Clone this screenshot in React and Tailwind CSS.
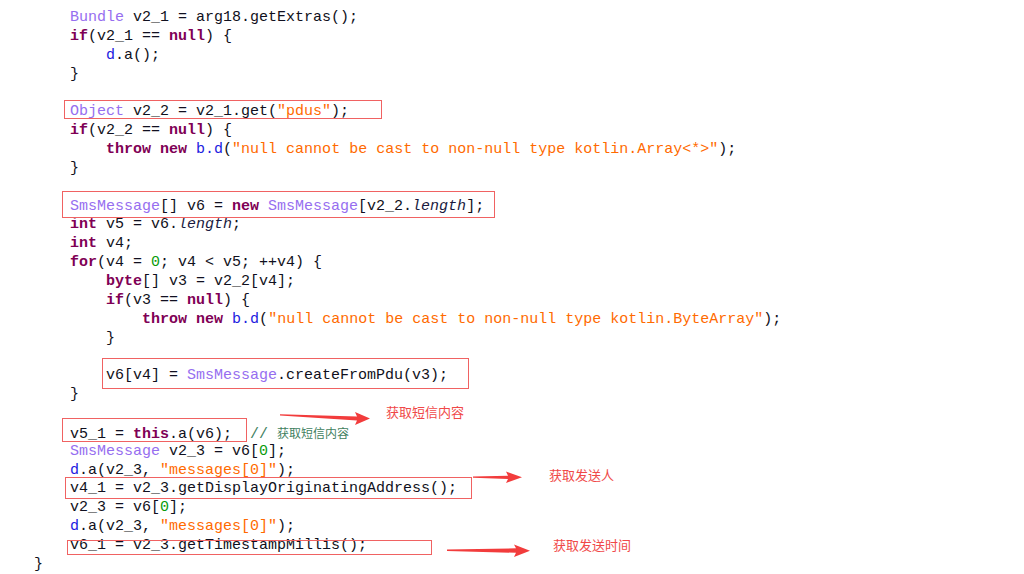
import React from 'react';

const tone = {
  k: 'text-[#7f0055] font-bold',
  t: 'text-[#966ef0]',
  f: 'text-[#2020e0]',
  s: 'text-[#ff6a00]',
  n: 'text-[#0a9a0a]',
  i: 'italic text-[#1a1a40]',
  c: 'text-[#3f7f5f]',
  cj: 'text-[#3f7f5f] text-[12px] font-["Noto_Sans_CJK_SC",sans-serif]',
};

const msg = [['    '], ['d', 'f'], ['.a(v2_3, '], ['"messages[0]"', 's'], [');']];

const lines = [
  [['    '], ['Bundle', 't'], [' v2_1 = arg18.getExtras();']],
  [['    '], ['if', 'k'], ['(v2_1 == '], ['null', 'k'], [') {']],
  [['        '], ['d', 'f'], ['.a();']],
  [['    }']],
  [],
  [['    '], ['Object', 't'], [' v2_2 = v2_1.get('], ['"pdus"', 's'], [');']],
  [['    '], ['if', 'k'], ['(v2_2 == '], ['null', 'k'], [') {']],
  [['        '], ['throw', 'k'], [' '], ['new', 'k'], [' '], ['b.d', 'f'], ['('], ['"null cannot be cast to non-null type kotlin.Array<*>"', 's'], [');']],
  [['    }']],
  [],
  [['    '], ['SmsMessage', 't'], ['[] v6 = '], ['new', 'k'], [' '], ['SmsMessage', 't'], ['[v2_2.'], ['length', 'i'], ['];']],
  [['    '], ['int', 'k'], [' v5 = v6.'], ['length', 'i'], [';']],
  [['    '], ['int', 'k'], [' v4;']],
  [['    '], ['for', 'k'], ['(v4 = '], ['0', 'n'], ['; v4 < v5; ++v4) {']],
  [['        '], ['byte', 'k'], ['[] v3 = v2_2[v4];']],
  [['        '], ['if', 'k'], ['(v3 == '], ['null', 'k'], [') {']],
  [['            '], ['throw', 'k'], [' '], ['new', 'k'], [' '], ['b.d', 'f'], ['('], ['"null cannot be cast to non-null type kotlin.ByteArray"', 's'], [');']],
  [['        }']],
  [],
  [['        v6[v4] = '], ['SmsMessage', 't'], ['.createFromPdu(v3);']],
  [['    }']],
  [],
  [['    v5_1 = '], ['this', 'k'], ['.a(v6);  '], ['// ', 'c'], ['获取短信内容', 'cj']],
  [['    '], ['SmsMessage', 't'], [' v2_3 = v6['], ['0', 'n'], ['];']],
  msg,
  [['    v4_1 = v2_3.getDisplayOriginatingAddress();']],
  [['    v2_3 = v6['], ['0', 'n'], ['];']],
  msg,
  [['    v6_1 = v2_3.getTimestampMillis();']],
  [['}']],
];

// red highlight boxes drawn over the code
const boxes = [
  'left-[64px] top-[100px] w-[318px] h-[19px]',
  'left-[62px] top-[191px] w-[433px] h-[27px]',
  'left-[102px] top-[358px] w-[367px] h-[31px]',
  'left-[62px] top-[418px] w-[185px] h-[24px]',
  'left-[65px] top-[477px] w-[407px] h-[22px]',
  'left-[67px] top-[540px] w-[365px] h-[15px]',
];

const notes = [
  { text: '获取短信内容', cls: 'left-[386px] top-[403px]' },
  { text: '获取发送人', cls: 'left-[549px] top-[466px]' },
  { text: '获取发送时间', cls: 'left-[553px] top-[536px]' },
];

const Arrows = () => (
  <svg className="absolute inset-0 pointer-events-none" width="1024" height="574" viewBox="0 0 1024 574">
    <g fill="#f23c3c">
      <polygon points="280,414.3 357,416.5 355,412 370,418.6 355,425 357,420.5 280,415.6" />
      <polygon points="473,476.4 508,475.8 506,471.5 522,477.2 506,483 508,479 473,477.8" />
      <polygon points="447,549.6 516,548.3 514,544.5 530,550.8 514,557 516,552.8 447,551" />
    </g>
  </svg>
);

export default function App() {
  return (
    <div className="relative w-[1024px] h-[574px] bg-white overflow-hidden">
      <div className="flex flex-col pt-[9px] pl-[34px] font-['Liberation_Mono',monospace] text-[15px] text-[#101020]">
        {lines.map((segs, i) => (
          <div key={i} className="h-[18.86px] leading-[18.86px] whitespace-pre">
            {segs.map(([txt, kind], j) => (
              <span key={j} className={kind ? tone[kind] : undefined}>{txt}</span>
            ))}
          </div>
        ))}
      </div>

      {boxes.map((b, i) => (
        <div key={i} className={`absolute border border-[#f06262] ${b}`} />
      ))}

      <Arrows />

      {notes.map((n) => (
        <div
          key={n.text}
          className={`absolute text-[13px] leading-[18px] text-[#f04848] font-['Noto_Sans_CJK_SC',sans-serif] ${n.cls}`}
        >
          {n.text}
        </div>
      ))}
    </div>
  );
}
